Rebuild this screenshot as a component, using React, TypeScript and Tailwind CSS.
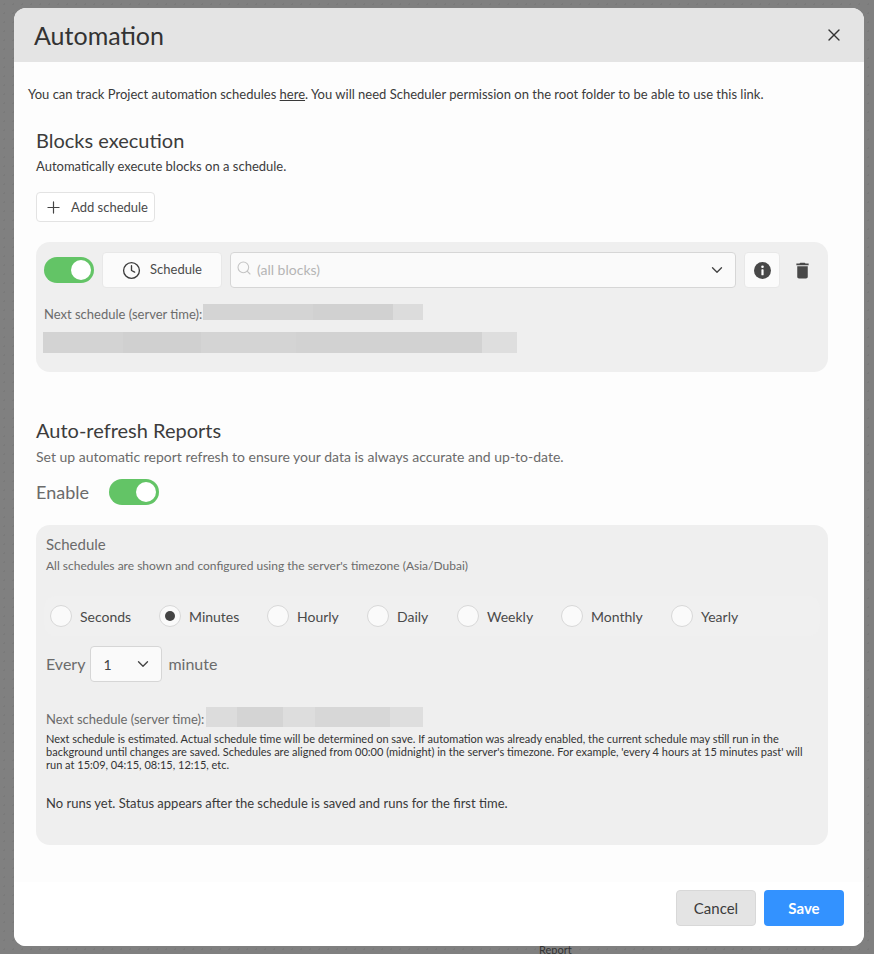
import React from "react";
import { ChevronDown, Clock, Plus, Search, X } from "lucide-react";
import { MdDelete } from "react-icons/md";

const FREQUENCIES = [
  { label: "Seconds", width: "w-[109px]" },
  { label: "Minutes", width: "w-[108px]" },
  { label: "Hourly", width: "w-[100px]" },
  { label: "Daily", width: "w-[90px]" },
  { label: "Weekly", width: "w-[104px]" },
  { label: "Monthly", width: "w-[110px]" },
  { label: "Yearly", width: "w-[80px]" },
];

function Toggle() {
  return (
    <div className="flex h-[26px] w-[50px] shrink-0 items-center justify-end rounded-full bg-[#63c466] pr-[3px]">
      <div className="h-[20px] w-[20px] rounded-full bg-white" />
    </div>
  );
}

function Redacted({ widths, className }: { widths: [number, string][]; className: string }) {
  return (
    <div className={`flex ${className}`}>
      {widths.map(([width, color], i) => (
        <div key={i} className="h-full" style={{ width, backgroundColor: color }} />
      ))}
    </div>
  );
}

export default function App() {
  return (
    <div className="relative h-[954px] w-[874px] overflow-hidden bg-[#808080] bg-[radial-gradient(circle,#7a7a7a_1px,transparent_1px)] bg-[size:9px_9px] pt-2 pl-[14px] font-['Lato',sans-serif] text-[#3c3c3c]">
      <span className="absolute top-[943px] left-[539px] text-[11px] leading-[14px] text-[#333]">Report</span>

      <div className="relative flex h-[938px] w-[850px] flex-col overflow-hidden rounded-xl bg-[#fdfdfd]">
        {/* Header */}
        <div className="flex h-[54px] shrink-0 items-center justify-between bg-[#e4e4e4] pr-5 pl-5">
          <h1 className="text-[25px] leading-[54px] text-[#333]">Automation</h1>
          <X className="h-5 w-5 text-[#333]" strokeWidth={1.6} />
        </div>

        {/* Body */}
        <div className="flex-1 px-[14px] pt-[24px]">
          <p className="text-[13px] leading-[17px] text-[#3a3a3a]">
            You can track Project automation schedules <span className="underline">here</span>. You will need Scheduler permission on the root folder to be able to use this link.
          </p>

          <div className="mx-2 mt-[24px]">
            <h2 className="text-[20px] leading-[26px] text-[#3c3c3c]">Blocks execution</h2>
            <p className="mt-[5px] text-[13px] leading-[16px] text-[#3c3c3c]">Automatically execute blocks on a schedule.</p>
            <button className="mt-[18px] flex h-[30px] w-[119px] items-center rounded border border-[#e3e3e3] bg-white pt-px pl-[7px] text-[13px] text-[#4a4a4a]">
              <Plus className="h-[19px] w-[19px] text-[#444]" strokeWidth={1.5} />
              <span className="ml-[8px]">Add schedule</span>
            </button>

            <div className="mt-5 h-[130px] w-[792px] rounded-[14px] bg-[#efefef] px-2 pt-[10px]">
              <div className="flex items-center gap-2">
                <Toggle />
                <button className="flex h-9 w-[120px] shrink-0 items-center justify-center rounded border border-[#e8e8e8] bg-[#fbfbfb] text-[13px] text-[#4a4a4a]">
                  <Clock className="h-[19px] w-[19px] text-[#3c3c3c]" strokeWidth={1.7} />
                  <span className="ml-[9px]">Schedule</span>
                </button>
                <div className="flex h-9 w-[506px] shrink-0 items-center rounded border border-[#d6d6d6] bg-[#fafafa] pr-[9px] pl-[5px]">
                  <Search className="h-4 w-4 -translate-y-[2px] text-[#c4c4c4]" strokeWidth={1.6} />
                  <span className="ml-[5px] flex-1 -translate-y-px text-[14px] text-[#b5b5b5]">(all blocks)</span>
                  <ChevronDown className="h-[18px] w-[18px] text-[#444]" strokeWidth={1.8} />
                </div>
                <button className="flex h-9 w-9 shrink-0 items-center justify-center rounded border border-[#e8e8e8] bg-[#fbfbfb]">
                  <svg viewBox="0 0 17 17" className="h-[17px] w-[17px]">
                    <circle cx="8.5" cy="8.5" r="8.5" fill="#484848" />
                    <circle cx="8.5" cy="4.8" r="1.3" fill="#fff" />
                    <rect x="7.4" y="7.3" width="2.2" height="6" rx="0.6" fill="#fff" />
                  </svg>
                </button>
                <MdDelete className="ml-1 h-[21px] w-[21px] text-[#484848]" />
              </div>
              <div className="mt-4 flex items-start">
                <span className="mt-[2px] w-[159px] text-[13px] leading-4 text-[#6b6b6b]">Next schedule (server time):</span>
                <Redacted
                  className="h-4"
                  widths={[[110, "#d4d4d4"], [80, "#d1d1d1"], [30, "#dcdcdc"]]}
                />
              </div>
              <Redacted
                className="mt-[10px] -ml-px h-[21px]"
                widths={[[80, "#d3d3d3"], [78, "#d0d0d0"], [95, "#d4d4d4"], [186, "#d2d2d2"], [35, "#dedede"]]}
              />
            </div>

            <h2 className="mt-[45px] text-[20px] leading-[26px] text-[#3c3c3c]">Auto-refresh Reports</h2>
            <p className="mt-[5px] text-[14px] leading-[17px] text-[#6b6b6b]">Set up automatic report refresh to ensure your data is always accurate and up-to-date.</p>
            <div className="mt-[14px] flex items-center">
              <span className="w-[73px] text-[18px] leading-[26px] text-[#6b6b6b]">Enable</span>
              <Toggle />
            </div>

            <div className="mt-5 h-[320px] w-[792px] rounded-[14px] bg-[#efefef] px-[10px] pt-[9px]">
              <h3 className="text-[15px] leading-5 text-[#6b6b6b]">Schedule</h3>
              <p className="mt-[5px] text-[12px] leading-[14px] text-[#6b6b6b]">All schedules are shown and configured using the server's timezone (Asia/Dubai)</p>

              <div className="-mx-[2px] mt-[23px] flex h-10 items-center rounded-xl bg-[#f0f0f0] pl-[6px]">
                {FREQUENCIES.map(({ label, width }) => (
                  <label key={label} className={`flex items-center ${width}`}>
                    <span className="flex h-[22px] w-[22px] shrink-0 items-center justify-center rounded-full border border-[#d8d8d8] bg-[#fafafa]">
                      {label === "Minutes" && <span className="h-[10px] w-[10px] rounded-full bg-[#444]" />}
                    </span>
                    <span className="ml-2 text-[14px] text-[#4a4a4a]">{label}</span>
                  </label>
                ))}
              </div>

              <div className="mt-[10px] flex items-center text-[16px] text-[#6b6b6b]">
                <span>Every</span>
                <div className="ml-[5px] flex h-9 w-[72px] items-center justify-between rounded border border-[#d6d6d6] bg-[#fafafa] pr-[9px] pl-3 text-[14px] text-[#444]">
                  1
                  <ChevronDown className="h-[18px] w-[18px] text-[#444]" strokeWidth={1.8} />
                </div>
                <span className="ml-[6px]">minute</span>
              </div>

              <div className="mt-[25px] flex h-5 items-start">
                <span className="mt-[4px] w-[160px] text-[13px] leading-4 text-[#6b6b6b]">Next schedule (server time):</span>
                <Redacted
                  className="h-5"
                  widths={[[31, "#dcdcdc"], [46, "#d4d4d4"], [32, "#dddddd"], [75, "#d7d7d7"], [33, "#dedede"]]}
                />
              </div>
              <p className="mt-[5px] w-[770px] text-[11px] leading-[13px] text-[#333]">
                Next schedule is estimated. Actual schedule time will be determined on save. If automation was already enabled, the current schedule may still run in the background until changes are saved. Schedules are aligned from 00:00 (midnight) in the server's timezone. For example, 'every 4 hours at 15 minutes past' will run at 15:09, 04:15, 08:15, 12:15, etc.
              </p>
              <p className="mt-[24px] text-[13px] leading-4 text-[#3a3a3a]">No runs yet. Status appears after the schedule is saved and runs for the first time.</p>
            </div>
          </div>
        </div>

        {/* Footer */}
        <div className="flex h-[64px] shrink-0 justify-end gap-2 bg-white pt-2 pr-5">
          <button className="h-9 w-20 rounded border border-[#d8d8d8] bg-[#e4e4e4] text-[15px] text-[#3c3c3c]">Cancel</button>
          <button className="h-9 w-20 rounded bg-[#3392ff] text-[15px] font-bold text-white">Save</button>
        </div>
      </div>
    </div>
  );
}
